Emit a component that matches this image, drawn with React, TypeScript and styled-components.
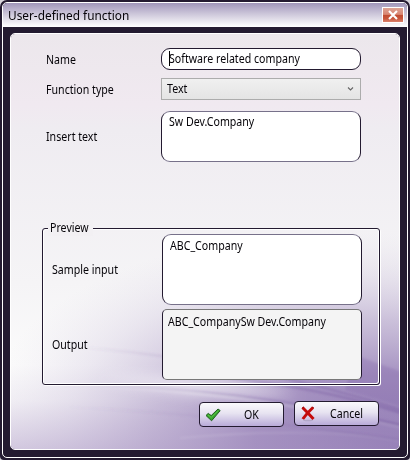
import React from "react";
import styled, { createGlobalStyle } from "styled-components";

const ink = "#231a30";

const GlobalStyle = createGlobalStyle`
  * { box-sizing: border-box; }
  html, body { margin: 0; padding: 0; }
  body {
    width: 410px;
    height: 460px;
    overflow: hidden;
    background: #d8d5dc;
    font-family: "Noto Sans", "Open Sans", sans-serif;
    font-size: 12px;
    color: #050308;
  }
`;

/* Narrows the letterforms to the dialog's compact text width. */
const Text = styled.span<{ $scale?: number }>`
  display: inline-block;
  white-space: nowrap;
  transform: scaleX(${(p) => p.$scale ?? 0.885});
  transform-origin: 0 50%;
`;

const Dialog = styled.div`
  width: 410px;
  height: 460px;
  padding: 2px;
  background: ${ink};
  border-radius: 7px 7px 4px 4px;
`;

const Frame = styled.div`
  height: 456px;
  border: 1px solid #fff;
  border-radius: 5px;
  overflow: hidden;
`;

const TitleBar = styled.header`
  height: 24px;
  padding: 0 3px 0 5px;
  display: flex;
  align-items: center;
  justify-content: space-between;
  background: linear-gradient(#a096b9 0%, #b9b1cc 25%, #dcd8e5 62%, #fff 100%);
`;

const Title = styled.h1`
  margin: 0;
  font-size: 13px;
  line-height: 22px;
  font-weight: 400;
`;

const CloseButton = styled.button`
  width: 22px;
  height: 16px;
  padding: 0;
  display: grid;
  place-items: center;
  border: 1px solid #fff;
  background: linear-gradient(#dda394 0%, #d98672 46%, #c04a30 50%, #c8573c 75%, #d8806c 100%);
`;

const Body = styled.div`
  padding: 6px 0 0 7px;
  background: ${ink};
`;

const Panel = styled.main`
  position: relative;
  width: 390px;
  height: 417px;
  border: 1px solid #fff;
  border-radius: 5px;
  overflow: hidden;
`;

const Artwork = styled.svg`
  position: absolute;
  inset: 0;
`;

const Content = styled.form`
  position: relative;
  height: 100%;
  padding: 14px 19px 0 31px;
`;

const Row = styled.div<{ $height: number; $gap?: number }>`
  display: grid;
  grid-template-columns: 115px 200px;
  align-items: center;
  padding-left: 4px;
  height: ${(p) => p.$height}px;
  margin-top: ${(p) => p.$gap ?? 0}px;
`;

const Label = styled.label<{ $shift?: number }>`
  padding-top: ${(p) => p.$shift ?? 0}px;
  line-height: 16px;
`;

const Field = styled.div<{ $inset?: number; $top: number; $edge?: string; $readOnly?: boolean }>`
  height: 100%;
  padding: ${(p) => p.$top}px 0 0 ${(p) => p.$inset ?? 7}px;
  border: 1px solid ${ink};
  border-top-color: ${(p) => p.$edge ?? ink};
  border-bottom-color: ${(p) => p.$edge ?? ink};
  border-radius: ${(p) => (p.$readOnly ? 5 : 9)}px;
  background: ${(p) => (p.$readOnly ? "#f4f4f4" : "#fff")};
  line-height: 16px;
`;

const Caret = styled.span`
  float: left;
  width: 1px;
  height: 15px;
  margin-right: -1px;
  background: #000;
`;

const Select = styled.div`
  height: 100%;
  padding: 0 6px 1px 5px;
  display: flex;
  align-items: center;
  justify-content: space-between;
  border: 1px solid #acacac;
  background: linear-gradient(#f0f0f0, #e4e4e4);
  line-height: 16px;
`;

const Group = styled.section`
  height: 157px;
  width: 338px;
  margin-top: 66px;
  border: 1px solid ${ink};
  border-radius: 3px;
  box-shadow: 1px 1px 0 #fff, inset 1px 1px 0 #fff, inset -1px -1px 0 #fff;
`;

const Legend = styled.h2`
  width: 45px;
  height: 16px;
  margin: -9px 0 -2px 5px;
  padding-left: 2px;
  background: #f2f0f3;
  font-size: inherit;
  font-weight: 400;
  line-height: 16px;
`;

const GroupRow = styled.div<{ $gap?: number }>`
  display: grid;
  grid-template-columns: 110px 200px;
  align-items: center;
  height: 71px;
  margin: ${(p) => p.$gap ?? 0}px 0 0 9px;
`;

const Actions = styled.footer`
  display: flex;
  gap: 10px;
  margin: 16px 0 0 157px;
`;

const Button = styled.button<{ $drop?: number; $iconGap: number }>`
  width: 85px;
  height: 25px;
  margin-top: ${(p) => p.$drop ?? 0}px;
  padding: 0 0 0 5px;
  display: flex;
  align-items: center;
  gap: ${(p) => p.$iconGap}px;
  border: 1px solid ${ink};
  border-radius: 4px;
  background: linear-gradient(#faf9fc 0%, #e7e3f1 45%, #b9abd9 100%);
  color: inherit;
  font: inherit;
`;

const Backdrop = () => (
  <Artwork width="388" height="415" viewBox="11 34 388 415" aria-hidden="true">
    <defs>
      <linearGradient id="sky" x1="0" y1="34" x2="0" y2="449" gradientUnits="userSpaceOnUse">
        <stop offset="0" stopColor="#ece7ec" />
        <stop offset="0.17" stopColor="#f0e9f0" />
        <stop offset="0.23" stopColor="#efecf1" />
        <stop offset="0.6" stopColor="#f5f4f6" />
        <stop offset="0.8" stopColor="#fbfbfb" />
      </linearGradient>
      <radialGradient id="glow" gradientUnits="userSpaceOnUse" cx="0" cy="0" r="1" gradientTransform="translate(400 450) rotate(6) scale(415 215)">
        <stop offset="0" stopColor="#8e77b2" />
        <stop offset="0.35" stopColor="#9c87bb" stopOpacity="0.9" />
        <stop offset="0.6" stopColor="#a693c1" stopOpacity="0.54" />
        <stop offset="0.8" stopColor="#b5a5cc" stopOpacity="0.22" />
        <stop offset="1" stopColor="#d2c8df" stopOpacity="0" />
      </radialGradient>
      <linearGradient id="floor" x1="0" y1="365" x2="0" y2="455" gradientUnits="userSpaceOnUse">
        <stop offset="0" stopColor="#a48fc0" stopOpacity="0" />
        <stop offset="0.4" stopColor="#a48fc0" stopOpacity="0.1" />
        <stop offset="1" stopColor="#a48fc0" stopOpacity="0.5" />
      </linearGradient>
      <linearGradient id="dark" x1="60" y1="0" x2="400" y2="0" gradientUnits="userSpaceOnUse">
        <stop offset="0" stopColor="#76599f" stopOpacity="0" />
        <stop offset="0.4" stopColor="#76599f" stopOpacity="0.18" />
        <stop offset="1" stopColor="#76599f" stopOpacity="0.5" />
      </linearGradient>
      <linearGradient id="light" x1="60" y1="0" x2="400" y2="0" gradientUnits="userSpaceOnUse">
        <stop offset="0" stopColor="#fff" stopOpacity="0" />
        <stop offset="0.5" stopColor="#fff" stopOpacity="0.25" />
        <stop offset="1" stopColor="#fff" stopOpacity="0.08" />
      </linearGradient>
      <filter id="soft" filterUnits="userSpaceOnUse" x="0" y="280" width="420" height="190">
        <feGaussianBlur stdDeviation="1.1" />
      </filter>
      <filter id="wide" filterUnits="userSpaceOnUse" x="0" y="280" width="420" height="190">
        <feGaussianBlur stdDeviation="7" />
      </filter>
    </defs>
    <rect x="11" y="34" width="388" height="415" fill="url(#sky)" />
    <rect x="11" y="34" width="388" height="415" fill="url(#glow)" />
    <rect x="11" y="365" width="388" height="84" fill="url(#floor)" />
    <path d="M100 378 Q230 372 300 396 L190 394Z" fill="#fff" opacity="0.6" filter="url(#wide)" />
    <g fill="none" filter="url(#soft)">
      <path d="M90 348 Q250 362 402 410" stroke="url(#dark)" strokeWidth="2" />
      <path d="M60 386 Q230 384 402 425" stroke="url(#dark)" strokeWidth="2" />
      <path d="M230 378 Q320 388 402 413" stroke="url(#dark)" strokeWidth="2.5" />
      <path d="M80 386 Q240 391 402 428" stroke="url(#light)" strokeWidth="2" />
      <path d="M70 407 Q240 416 402 440" stroke="url(#dark)" strokeWidth="1.5" opacity="0.6" />
      <path d="M180 438 Q320 426 402 442" stroke="url(#light)" strokeWidth="1.5" opacity="0.6" />
    </g>
    <path d="M355 355 Q382 365 402 372 L402 407 Q380 400 345 390Z" fill="#8064a8" opacity="0.28" filter="url(#soft)" />
  </Artwork>
);

const CloseIcon = () => (
  <svg width="12" height="10" viewBox="0 0 12 10">
    <path d="M2 1 L10 9 M10 1 L2 9" stroke="#fff" strokeWidth="2.1" />
  </svg>
);

const Chevron = () => (
  <svg width="7" height="6" viewBox="0 0 7 6">
    <path d="M1 1.5 L3.5 4 L6 1.5" fill="none" stroke="#666" strokeWidth="1.1" />
  </svg>
);

const CheckIcon = () => (
  <svg width="16" height="14" viewBox="0 0 16 14">
    <path d="M1 7.5 L3.2 5.4 L6.2 7.6 L13 1 L15.2 2.6 L6.6 12.8Z" fill="#36a62c" stroke="#225f20" strokeWidth="1" strokeLinejoin="round" />
    <path d="M3 7 L6.3 9.4 L13.2 2.5" fill="none" stroke="#67ca50" strokeWidth="0.8" />
  </svg>
);

const CrossIcon = () => (
  <svg width="16" height="16" viewBox="0 0 16 16">
    <ellipse cx="8" cy="14.5" rx="5" ry="0.7" fill="#857b98" opacity="0.35" />
    <path d="M2.5 1.5 Q7 6 13.5 13 M13 1.5 Q7 7 2.8 13" fill="none" stroke="#c40b0b" strokeWidth="3" />
    <path d="M2 2 L4 1 M12 1 L14 2" stroke="#9b0808" strokeWidth="1" />
  </svg>
);

export default function App() {
  return (
    <>
      <GlobalStyle />
      <Dialog role="dialog">
        <Frame>
          <TitleBar>
            <Title><Text $scale={0.91}>User-defined function</Text></Title>
            <CloseButton aria-label="Close"><CloseIcon /></CloseButton>
          </TitleBar>
          <Body>
            <Panel>
              <Backdrop />
              <Content>
                <Row $height={22}>
                  <Label $shift={2}><Text>Name</Text></Label>
                  <Field $top={2}><Caret /><Text>Software related company</Text></Field>
                </Row>
                <Row $height={22} $gap={8}>
                  <Label $shift={2}><Text>Function type</Text></Label>
                  <Select><Text>Text</Text><Chevron /></Select>
                </Row>
                <Row $height={51} $gap={11}>
                  <Label $shift={1}><Text>Insert text</Text></Label>
                  <Field $top={2} $edge="#77718a"><Text>Sw Dev.Company</Text></Field>
                </Row>
                <Group>
                  <Legend><Text>Preview</Text></Legend>
                  <GroupRow>
                    <Label $shift={1}><Text>Sample input</Text></Label>
                    <Field $top={3} $edge="#77718a"><Text>ABC_Company</Text></Field>
                  </GroupRow>
                  <GroupRow $gap={4}>
                    <Label $shift={1}><Text>Output</Text></Label>
                    <Field $top={4} $inset={5} $edge="#777" $readOnly><Text>ABC_CompanySw Dev.Company</Text></Field>
                  </GroupRow>
                </Group>
                <Actions>
                  <Button type="button" $drop={1} $iconGap={23}><CheckIcon /><Text>OK</Text></Button>
                  <Button type="button" $iconGap={14}><CrossIcon /><Text>Cancel</Text></Button>
                </Actions>
              </Content>
            </Panel>
          </Body>
        </Frame>
      </Dialog>
    </>
  );
}
